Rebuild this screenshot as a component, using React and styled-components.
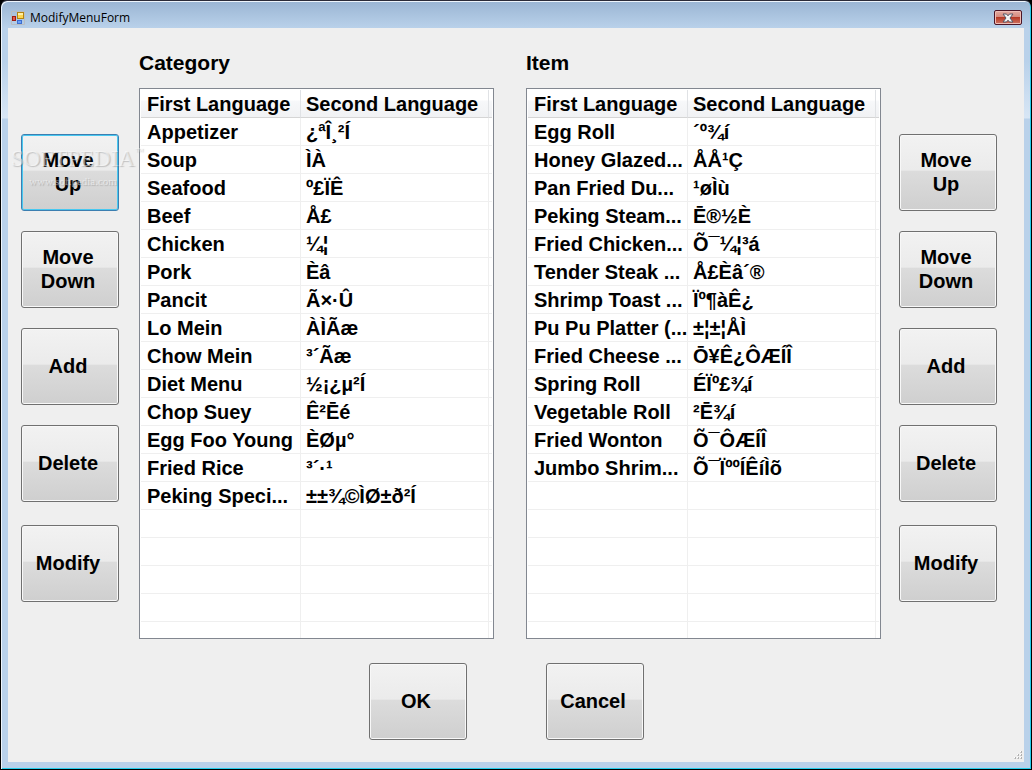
import styled, { createGlobalStyle } from 'styled-components';

const categories = [
  ['Appetizer', '¿ªÎ¸²Í'],
  ['Soup', 'ÌÀ'],
  ['Seafood', 'º£ÏÊ'],
  ['Beef', 'Å£'],
  ['Chicken', '¼¦'],
  ['Pork', 'Èâ'],
  ['Pancit', 'Ã×·Û'],
  ['Lo Mein', 'ÀÌÃæ'],
  ['Chow Mein', '³´Ãæ'],
  ['Diet Menu', '½¡¿µ²Í'],
  ['Chop Suey', 'Ê²Ēé'],
  ['Egg Foo Young', 'ÈØµ°'],
  ['Fried Rice', '³´·¹'],
  ['Peking Speci...', '±±¾©ÌØ±ð²Í'],
];

const items = [
  ['Egg Roll', '´º¾í'],
  ['Honey Glazed...', 'ÅÅ¹Ç'],
  ['Pan Fried Du...', '¹øÌù'],
  ['Peking Steam...', 'Ē®½È'],
  ['Fried Chicken...', 'Õ¯¼¦³á'],
  ['Tender Steak ...', 'Å£Èâ´®'],
  ['Shrimp Toast ...', 'Ïº¶àÊ¿'],
  ['Pu Pu Platter (...', '±¦±¦ÅÌ'],
  ['Fried Cheese ...', 'Ō¥Ê¿ÔÆÍÎ'],
  ['Spring Roll', 'ÉÏº£¾í'],
  ['Vegetable Roll', '²Ē¾í'],
  ['Fried Wonton', 'Õ¯ÔÆÍÎ'],
  ['Jumbo Shrim...', 'Õ¯ÏººÍÊíÌõ'],
];

const actions = ['Move\nUp', 'Move\nDown', 'Add', 'Delete', 'Modify'];

// full rows the list has room for, the last one is cut off by the frame
const VISIBLE_ROWS = 18;

const GlobalStyle = createGlobalStyle`
  * {
    box-sizing: border-box;
  }
  body {
    margin: 0;
    background: #000;
    font-family: 'Liberation Sans', Arial, sans-serif;
    color: #000;
  }
`;

const Window = styled.div`
  position: relative;
  display: flex;
  flex-direction: column;
  min-height: 100vh;
  padding: 0 7px 7px;
  border: 1px solid #000;
  border-top-color: #2b2b38;
  border-radius: 7px 7px 0 0;
  box-shadow: inset 1px 1px 0 #eef5fc, inset -1px -1px 0 #25cdec;
  background: linear-gradient(
    #9ab5d3 0,
    #b9d1ea 27px,
    #b9d1ea 60px,
    #d8e6f5 117px,
    #b9d1ea 118px
  );
`;

const TitleBar = styled.header`
  display: flex;
  align-items: center;
  height: 27px;
  padding: 6px 2px 0 3px;
`;

const Title = styled.h1`
  flex: 1;
  margin: 0 0 0 5px;
  font: 12px/16px 'Open Sans', 'Noto Sans', sans-serif;
`;

const CloseButton = styled.button`
  display: flex;
  align-items: center;
  justify-content: center;
  width: 28px;
  height: 15px;
  padding: 0;
  border: 1px solid #4b1526;
  border-radius: 2px;
  background: linear-gradient(#e3aaa0 0, #d5897c 48%, #b63a26 50%, #cf7362 100%);
  box-shadow: inset 0 0 0 1px #efbdb5;
`;

const Client = styled.main`
  position: relative;
  flex: 1;
  background: #efefef;
`;

const Columns = styled.div`
  display: flex;
  padding: 21px 27px 0 13px;
`;

const Actions = styled.div`
  display: flex;
  flex-direction: column;
  gap: 20px;
  padding-top: 85px;
  button:last-child {
    margin-top: 3px;
  }
`;

const Button = styled.button`
  width: 98px;
  height: 77px;
  padding: 0 4px 2px 0;
  border: 1px solid ${(props) => (props.$active ? '#3c7fb1' : '#707070')};
  border-radius: 3px;
  box-shadow: inset 0 0 0 1px ${(props) => (props.$active ? '#48c8f0' : '#f8f8f8')};
  background: linear-gradient(#f2f2f2 0, #ebebeb 47%, #dcdcdc 48%, #cfcfcf 100%);
  color: #000;
  font: bold 20px/24px 'Liberation Sans', Arial, sans-serif;
  white-space: pre-line;
`;

const Lists = styled.div`
  display: flex;
  flex: 1;
  gap: 32px;
  margin: 0 18px 0 20px;
`;

const ListSection = styled.section`
  flex: 1;
  min-width: 0;
`;

const ListTitle = styled.h2`
  margin: 0 0 11px;
  font-size: 21px;
  line-height: 28px;
`;

const Frame = styled.div`
  padding: 1px 1px 0;
  border: 1px solid #828790;
  background: #fff;
`;

const Table = styled.table`
  width: 100%;
  table-layout: fixed;
  border-collapse: separate;
  border-spacing: 0;
  font-weight: bold;
  font-size: 20px;
  line-height: 24px;
`;

const HeadCell = styled.th`
  width: ${(props) => props.$width};
  height: 28px;
  padding: 0 0 0 5px;
  border-right: 1px solid #e0e2e5;
  border-bottom: 1px solid #d5d5d5;
  background: linear-gradient(#fff 0, #fff 38%, #f7f8fa 40%, #f1f2f4 100%);
  text-align: left;
  white-space: nowrap;
  &:first-child {
    padding-left: 6px;
  }
  &:last-child {
    padding: 0;
    border-right: 0;
  }
`;

const Cell = styled.td`
  height: ${(props) => (props.$cut ? '16px' : '28px')};
  padding: 0 0 0 5px;
  border-right: 1px solid #efefef;
  border-bottom: ${(props) => (props.$cut ? '0' : '1px solid #efefef')};
  overflow: hidden;
  white-space: nowrap;
  &:first-child {
    padding-left: 6px;
  }
  &:last-child {
    padding: 0;
    border-right: 0;
  }
`;

const Footer = styled.footer`
  display: flex;
  justify-content: center;
  gap: 79px;
  padding: 24px 19px 22px 0;
`;

const Grip = styled.svg`
  position: absolute;
  right: 1px;
  bottom: 1px;
`;

const Watermark = styled.div`
  position: absolute;
  top: 146px;
  left: 10px;
  width: 124px;
  color: rgba(255, 255, 255, 0.5);
  font: 23px/24px 'Liberation Serif', serif;
  text-align: center;
  text-shadow: 1px 1px 1px rgba(120, 120, 120, 0.4);
  white-space: nowrap;
  pointer-events: none;
  sup {
    position: absolute;
    top: -8px;
    left: 124px;
    font-size: 9px;
  }
`;

const WatermarkUrl = styled.div`
  font-size: 11px;
  line-height: 20px;
`;

function FormIcon() {
  return (
    <svg width="14" height="14" viewBox="0 0 14 14" aria-hidden="true">
      <path d="M0.500 0.500H13.500V13.500H0.500Z" fill="none" stroke="#b9bdc2" />
      <rect x="1.500" y="5.500" width="3" height="4" fill="#e2574a" stroke="#9e1c12" />
      <rect x="6.500" y="1.500" width="6" height="6" fill="#fcd651" stroke="#b48411" />
      <path d="M7 2h5v2H7z" fill="#fff0a8" />
      <rect x="6.500" y="9.500" width="4" height="3" fill="#6ea0f5" stroke="#3c6ed0" />
    </svg>
  );
}

function CloseIcon() {
  return (
    <svg width="12" height="10" viewBox="0 0 12 10" aria-hidden="true">
      <path
        d="M1 1h3.500L6 2.800 7.500 1H11L8 5l3 4H7.500L6 7.200 4.500 9H1l3-4z"
        fill="#f4f4f4"
        stroke="#535666"
      />
    </svg>
  );
}

function SizeGrip() {
  const dots = [
    [8, 1],
    [5, 4],
    [8, 4],
    [2, 7],
    [5, 7],
    [8, 7],
  ];
  return (
    <Grip width="10" height="10" viewBox="0 0 10 10" aria-hidden="true">
      {dots.map(([x, y]) => (
        <g key={`${x}-${y}`}>
          <rect x={x - 1} y={y - 1} width="2" height="2" fill="#fff" />
          <rect x={x - 1} y={y} width="1" height="1" fill="#d0d0d0" />
          <rect x={x} y={y - 1} width="1" height="2" fill="#b0b0b0" />
        </g>
      ))}
    </Grip>
  );
}

function ActionColumn({ label, activeIndex }) {
  return (
    <Actions role="group" aria-label={label}>
      {actions.map((action, i) => (
        <Button key={action} type="button" $active={i === activeIndex}>
          {action}
        </Button>
      ))}
    </Actions>
  );
}

function LanguageList({ id, title, rows }) {
  const lines = Array.from({ length: VISIBLE_ROWS + 1 }, (_, i) => rows[i] || ['', '']);
  return (
    <ListSection>
      <ListTitle id={id}>{title}</ListTitle>
      <Frame>
        <Table aria-labelledby={id}>
          <thead>
            <tr>
              <HeadCell $width="160px">First Language</HeadCell>
              <HeadCell $width="188px">Second Language</HeadCell>
              <HeadCell />
            </tr>
          </thead>
          <tbody>
            {lines.map(([first, second], i) => (
              <tr key={i}>
                <Cell $cut={i === VISIBLE_ROWS}>{first}</Cell>
                <Cell $cut={i === VISIBLE_ROWS}>{second}</Cell>
                <Cell $cut={i === VISIBLE_ROWS} />
              </tr>
            ))}
          </tbody>
        </Table>
      </Frame>
    </ListSection>
  );
}

export default function App() {
  return (
    <>
      <GlobalStyle />
      <Window>
        <TitleBar>
          <FormIcon />
          <Title>ModifyMenuForm</Title>
          <CloseButton type="button" aria-label="Close">
            <CloseIcon />
          </CloseButton>
        </TitleBar>
        <Client>
          <Columns>
            <ActionColumn label="Category actions" activeIndex={0} />
            <Lists>
              <LanguageList id="category" title="Category" rows={categories} />
              <LanguageList id="item" title="Item" rows={items} />
            </Lists>
            <ActionColumn label="Item actions" />
          </Columns>
          <Footer>
            <Button type="button">OK</Button>
            <Button type="button">Cancel</Button>
          </Footer>
          <SizeGrip />
        </Client>
        <Watermark>
          SOFTPEDIA<sup>™</sup>
          <WatermarkUrl>www.softpedia.com</WatermarkUrl>
        </Watermark>
      </Window>
    </>
  );
}
